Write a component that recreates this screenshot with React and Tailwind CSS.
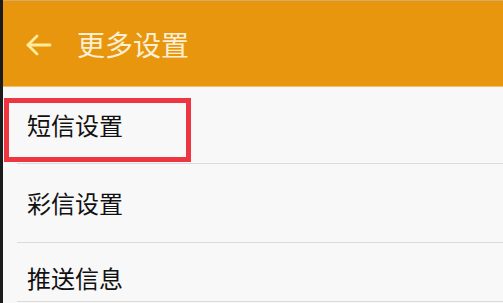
import React from 'react';

const rows = [
  { label: '短信设置', className: 'h-[77px] items-center' },
  { label: '彩信设置', className: 'h-[78px] items-center' },
  { label: '推送信息', className: 'h-[58px] items-start pt-[23px]' },
];

const BackArrow = () => (
  <svg width="26" height="22" viewBox="0 0 26 22" fill="none" stroke="#fdec9e" strokeWidth="2.8" strokeLinecap="round" strokeLinejoin="round">
    <path d="M2 11 H24" />
    <path d="M11 2 L2 11 L11 20" />
  </svg>
);

export default function App() {
  return (
    <div
      className="relative flex w-[503px] h-[303px] overflow-hidden bg-[#f8f8f8]"
      style={{ fontFamily: '"Noto Sans CJK SC", "Noto Sans", sans-serif' }}
    >
      {/* dark left edge of the capture */}
      <div className="w-[3px] shrink-0 bg-[#1b1b1b]" />

      <div className="flex-1 flex flex-col">
        {/* Header */}
        <div className="h-[86px] shrink-0 flex items-center bg-[#e9960f] border-t border-[#d9ab6a] shadow-[0_1px_0_#f4c06a]">
          <div className="ml-[23px] mt-[3px] flex items-center">
            <BackArrow />
          </div>
          <h1 className="ml-[25px] text-[28px] leading-[28px] text-[#fcefd3]">更多设置</h1>
        </div>

        {/* List */}
        <div className="flex-1 flex flex-col">
          {rows.map((row, i) => (
            <div key={i} className="flex flex-col">
              <div className={`flex pl-[24px] ${row.className}`}>
                <span className="text-[24px] leading-[24px] text-[#111111]">{row.label}</span>
              </div>
              <div className="ml-[14px] h-px bg-[#dcdcdc]" />
            </div>
          ))}
          <div className="ml-[24px] mt-[1px] w-[13px] h-[2px] bg-[#b8b8b8]" />
        </div>
      </div>

      {/* red annotation box */}
      <div className="absolute left-[4px] top-[98px] w-[187px] h-[64px] border-[5px] border-[#ee3542]" />
    </div>
  );
}
